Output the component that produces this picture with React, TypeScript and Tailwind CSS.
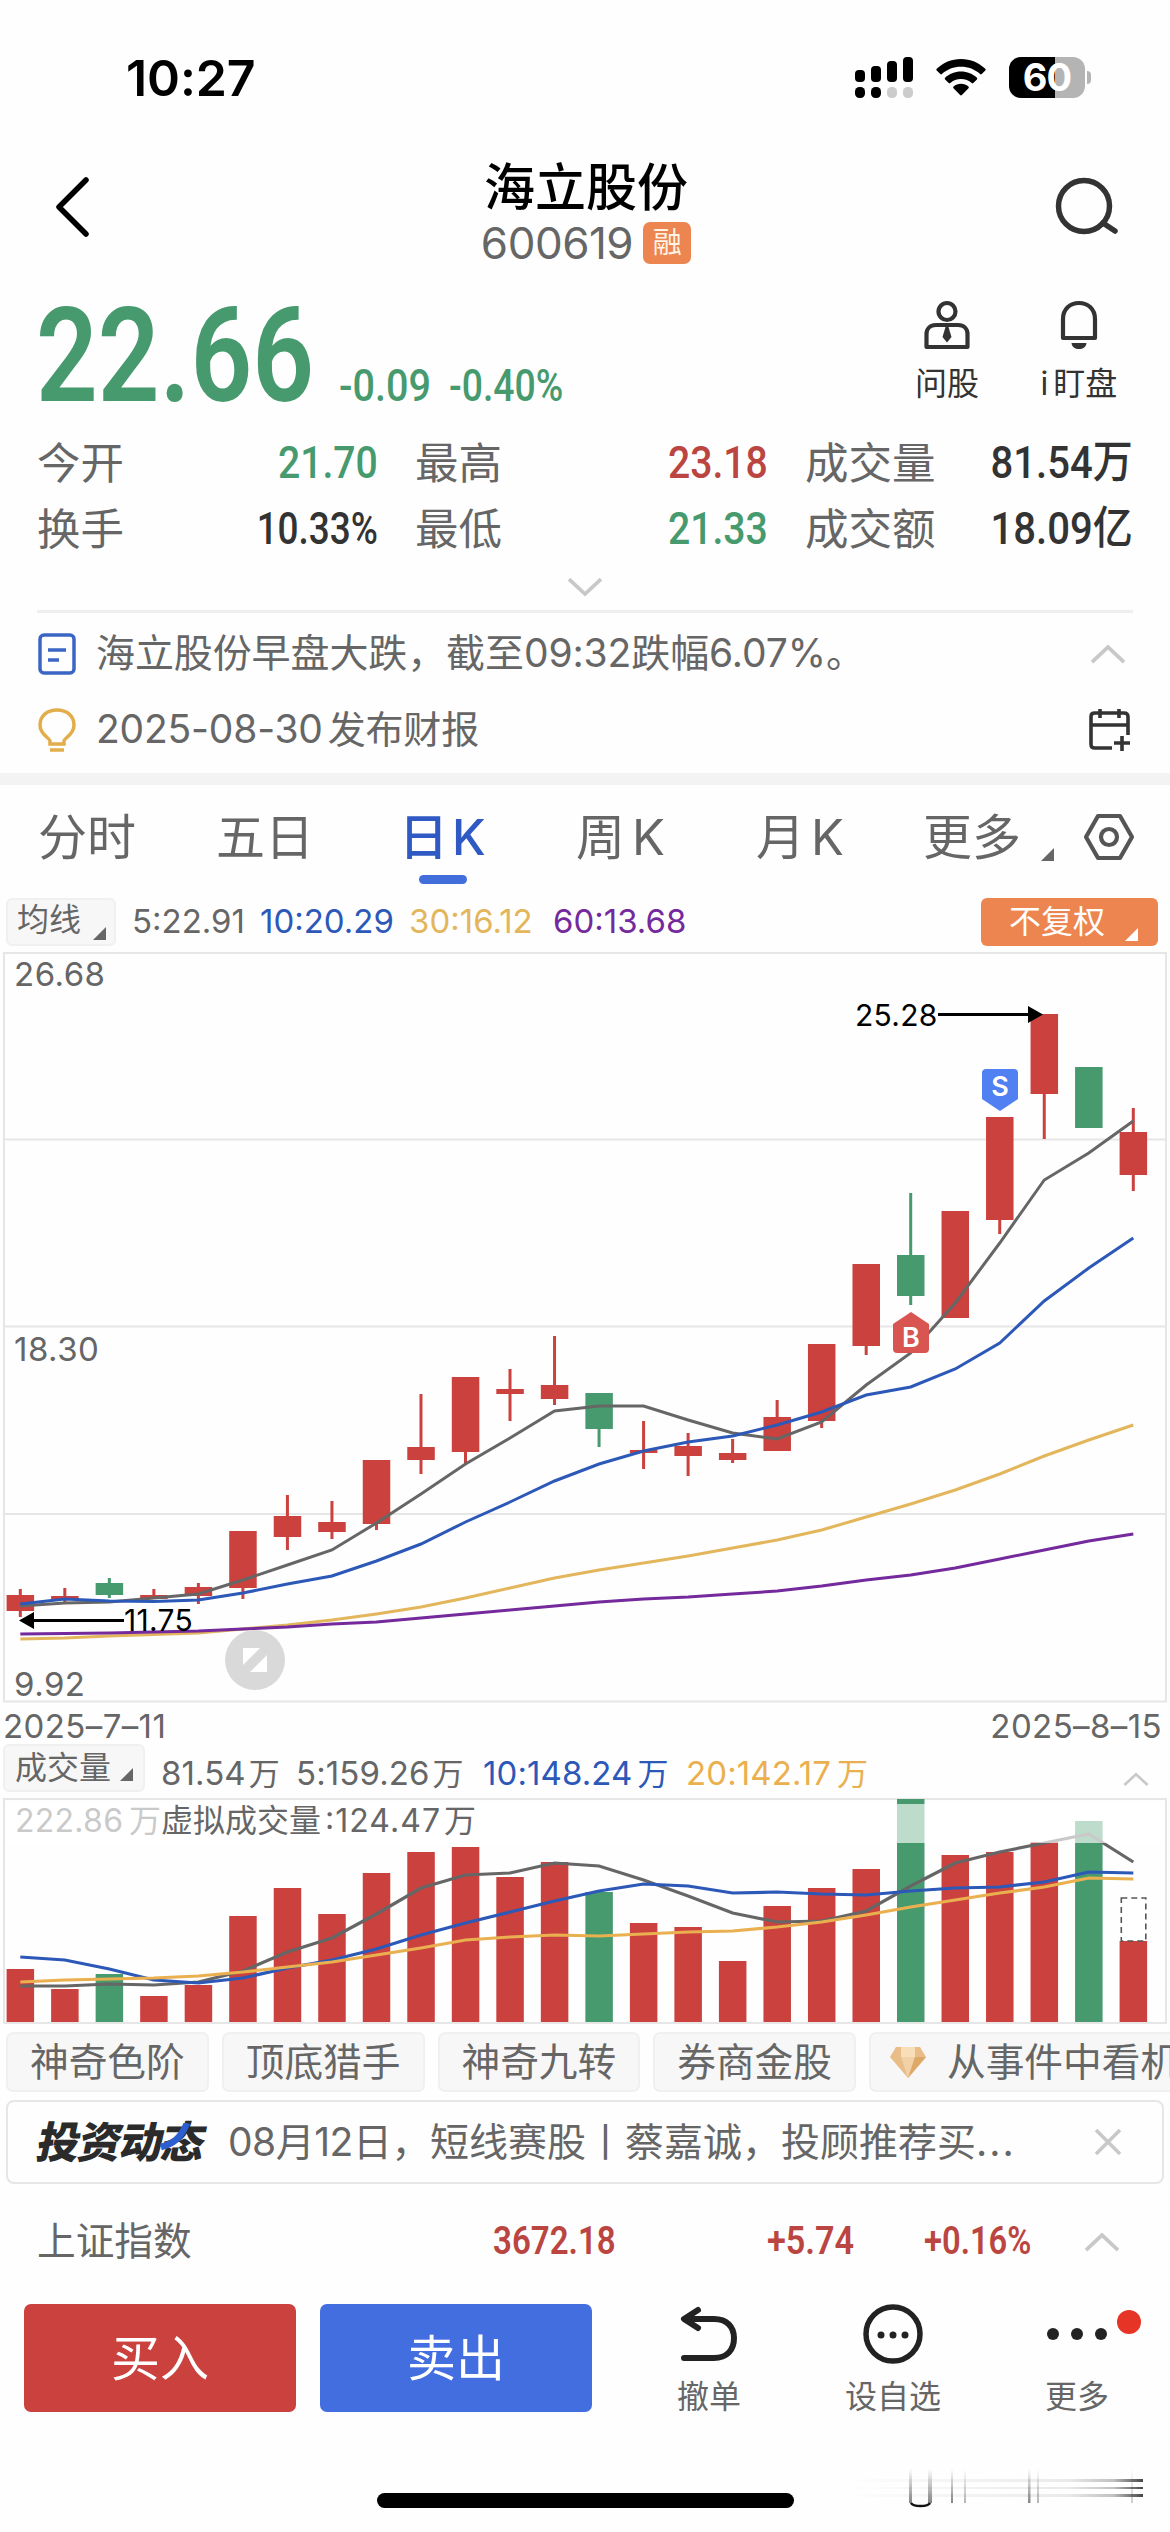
import type { ReactNode } from "react";

const RED = "#cb413d";
const GREEN = "#479a6e";
const STEP = 44.52;
const cx = (i: number) => 17.3 + i * STEP;

type Candle = { high: number; top: number; bottom: number; low: number; down?: boolean };

// Pixel rows inside the price panel
const candles: Candle[] = [
    { high: 637, top: 643, bottom: 659, low: 665 },
    { high: 636, top: 644, bottom: 648, low: 650 },
    { high: 626, top: 631, bottom: 643, low: 646, down: true },
    { high: 637, top: 643, bottom: 647, low: 647 },
    { high: 631, top: 635, bottom: 644, low: 652 },
    { high: 579, top: 579, bottom: 636, low: 647 },
    { high: 543, top: 564, bottom: 585, low: 598 },
    { high: 549, top: 570, bottom: 580, low: 587 },
    { high: 508, top: 508, bottom: 572, low: 578 },
    { high: 442, top: 495, bottom: 508, low: 522 },
    { high: 425, top: 425, bottom: 500, low: 513 },
    { high: 417, top: 437, bottom: 442, low: 469 },
    { high: 384, top: 433, bottom: 447, low: 453 },
    { high: 441, top: 441, bottom: 477, low: 495, down: true },
    { high: 469, top: 498, bottom: 501, low: 517 },
    { high: 481, top: 494, bottom: 504, low: 524 },
    { high: 487, top: 501, bottom: 508, low: 511 },
    { high: 448, top: 465, bottom: 499, low: 499 },
    { high: 392, top: 392, bottom: 469, low: 476 },
    { high: 312, top: 312, bottom: 394, low: 403 },
    { high: 241, top: 303, bottom: 344, low: 353, down: true },
    { high: 259, top: 259, bottom: 366, low: 366 },
    { high: 165, top: 165, bottom: 268, low: 282 },
    { high: 62, top: 62, bottom: 142, low: 187 },
    { high: 115, top: 115, bottom: 176, low: 176, down: true },
    { high: 156, top: 180, bottom: 223, low: 239 },
];

const priceLines = [
    { color: "#666666", ys: [654, 651, 650, 646, 642, 628, 613, 598, 571, 542, 512, 486, 459, 454, 454, 468, 481, 487, 470, 433, 401, 351, 291, 228, 201, 169] },
    { color: "#2c58b8", ys: [652, 647, 649, 649.5, 648, 641, 632, 624, 609, 592, 570, 550, 529, 512, 499, 490, 484, 473, 460, 443, 435, 417, 391, 349, 316, 286] },
    { color: "#e3b65c", ys: [687, 686, 684, 682.5, 681, 677, 673, 668, 662, 655, 646, 636, 626, 618, 611, 604, 596, 588, 578, 565, 552, 538, 522, 504, 488, 473] },
    { color: "#74299c", ys: [682, 681.5, 681, 680, 679, 677, 675, 672, 670, 666, 662, 658, 654, 650, 647, 645, 642, 639, 634, 628, 623, 616, 607, 598, 589, 582] },
];

const volumes = [171, 191, 176, 198, 187, 118, 90, 116, 75, 54, 49, 79, 64, 94, 125, 129, 163, 108, 90, 71, 1, 57, 54, 44, 23, 143];
const downDays = [2, 13, 20, 24];

const volumeLines = [
    { color: "#666666", ys: [188, 188, 186, 187, 184, 173, 154, 140, 116, 90, 77, 75, 65, 68, 82, 98, 115, 124, 123, 113, 88, 65, 54, 45, 36, 64] },
    { color: "#2c58b8", ys: [159, 162, 171, 182, 185, 180, 170, 162, 151, 137, 125, 114, 103, 93, 86, 88, 95, 94, 96, 97, 93, 90, 89, 84, 74, 75] },
    { color: "#eab04f", ys: [184, 182, 181, 180, 178, 174, 169, 164, 157, 150, 142, 139, 137, 138, 136, 134, 133, 129, 124, 117, 109, 102, 95, 89, 80, 81] },
];

const toPoints = (ys: number[]) => ys.map((y, i) => `${cx(i)},${y}`).join(" ");

function Corner({ className = "" }: { className?: string }) {
    return (
        <svg className={className} width="13" height="13" viewBox="0 0 13 13">
            <path d="M13 0V13H0Z" fill="currentColor" />
        </svg>
    );
}

function Chevron({ up = false, width = 36 }: { up?: boolean; width?: number }) {
    return (
        <svg width={width} height={width * 0.56} viewBox="0 0 36 20" fill="none" stroke="#c8c8c8" strokeWidth="3.6">
            <path d={up ? "M2 18 18 3 34 18" : "M2 2 18 17 34 2"} />
        </svg>
    );
}

function StatusBar() {
    return (
        <div className="flex h-[150px] items-start justify-between pl-[126px] pr-[79px]">
            <span className="mt-[41px] text-[50px] font-semibold leading-[74px] tracking-[-0.100px] text-black">10:27</span>
            <div className="mt-[57px] flex items-start">
                <svg width="58" height="42" viewBox="0 0 58 42">
                    <rect x="0" y="13" width="10" height="12" rx="4" />
                    <rect x="16" y="9" width="10" height="16" rx="4" />
                    <rect x="32" y="4" width="10" height="21" rx="4" />
                    <rect x="48" y="0" width="10" height="25" rx="4" />
                    <rect x="0" y="30" width="10" height="11" rx="4.5" />
                    <rect x="16" y="30" width="10" height="11" rx="4.5" />
                    <rect x="32" y="30" width="10" height="11" rx="4.5" fill="#cccccc" />
                    <rect x="48" y="30" width="10" height="11" rx="4.5" fill="#cccccc" />
                </svg>
                <svg className="ml-[23px] mt-[2px]" width="50" height="37" viewBox="0 0 50 37">
                    <path d="M25 0C34.500 0 43 3.700 49.300 9.800C49.800 10.300 49.800 11 49.300 11.500L45.700 15.100C45.200 15.600 44.600 15.600 44.100 15.100C39 10.300 32.300 7.800 25 7.800S11 10.300 5.900 15.100C5.400 15.600 4.800 15.600 4.300 15.100L.7 11.500C.2 11 .2 10.300 .7 9.800C7 3.700 15.500 0 25 0Z" />
                    <path d="M25 12.500C31.200 12.500 36.800 14.900 40.900 18.700C41.400 19.200 41.400 19.900 40.900 20.400L37.300 24C36.800 24.500 36.200 24.500 35.700 24C32.900 21.500 29.100 20 25 20S17.100 21.500 14.300 24C13.800 24.500 13.200 24.500 12.700 24L9.100 20.400C8.600 19.900 8.600 19.200 9.100 18.700C13.200 14.900 18.800 12.500 25 12.500Z" />
                    <path d="M25 24.800C27.800 24.800 30.400 25.800 32.400 27.500C33 28 33 28.700 32.500 29.200L25.900 36C25.400 36.500 24.600 36.500 24.100 36L17.500 29.200C17 28.700 17 28 17.600 27.500C19.600 25.800 22.200 24.800 25 24.800Z" />
                </svg>
                <div className="ml-[23px] flex h-[41px] w-[76px] items-center justify-center rounded-[12px] bg-[linear-gradient(to_right,#000_60%,#b4b4b4_60%)] text-[38px] font-bold leading-[41px] tracking-tight text-white">60</div>
                <div className="ml-[2px] mt-[14px] h-[13px] w-[4px] rounded-r-full bg-[#b4b4b4]" />
            </div>
        </div>
    );
}

function Header() {
    return (
        <header className="flex h-[130px] items-start justify-between pl-[55px] pr-[51px]">
            <svg className="mt-[26px]" width="36" height="62" viewBox="0 0 36 62" fill="none" stroke="#000" strokeWidth="5.500" strokeLinecap="round" strokeLinejoin="round">
                <path d="M31 4 4 31 31 58" />
            </svg>
            <div className="ml-[26px] mt-[7px] flex flex-col items-center">
                <h1 className="text-[51px] font-medium leading-[62px] text-black">海立股份</h1>
                <div className="mt-[2px] flex h-[44px] items-center gap-[10px]">
                    <span className="text-[44px] leading-[44px] tracking-[-0.500px] text-[#666]">600619</span>
                    <span className="flex h-[42px] w-[48px] items-center justify-center rounded-[7px] bg-[#ec8550] text-[29px] leading-none text-[#fff3e6]">融</span>
                </div>
            </div>
            <svg className="mt-[26px]" width="64" height="60" viewBox="0 0 64 60" fill="none" stroke="#333" strokeWidth="5.500" strokeLinecap="round">
                <circle cx="29" cy="30" r="25.500" />
                <path d="m48 47 12 8" />
            </svg>
        </header>
    );
}

function Quote() {
    return (
        <section className="flex h-[146px] items-start justify-between pl-[36px] pr-[52px]">
            <div className="flex items-baseline pt-[3px] font-[Roboto] text-[#479a6e]">
                <span className="w-[303px] whitespace-nowrap">
                    <span className="inline-block origin-left scale-x-[0.82] text-[132px] font-semibold leading-[146px]">22.66</span>
                </span>
                <span className="w-[110px]">
                    <span className="inline-block origin-left scale-x-[0.88] text-[45px] font-medium">-0.09</span>
                </span>
                <span className="inline-block origin-left scale-x-[0.83] text-[45px] font-medium">-0.40%</span>
            </div>
            <div className="mt-[20px] flex gap-[61px] text-[32px] text-[#333]">
                <div className="flex w-[64px] flex-col items-center">
                    <svg width="48" height="50" viewBox="0 0 48 50" fill="none" stroke="#333" strokeWidth="4.200">
                        <circle cx="24" cy="11.500" r="8.500" />
                        <path d="M13 25H35C41 25 44.500 29 44.500 34V47H3.500V34C3.500 29 7 25 13 25Z" strokeLinejoin="round" />
                        <path d="M22.500 27H25.500L28.500 37 24 42.500 19.500 37Z" fill="#333" stroke="none" />
                    </svg>
                    <span className="mt-[7px] whitespace-nowrap leading-[54px]">问股</span>
                </div>
                <div className="flex w-[78px] flex-col items-center">
                    <svg width="48" height="50" viewBox="0 0 48 50" fill="none" stroke="#333" strokeWidth="4.200">
                        <path d="M8 38V19C8 9 15 3 24 3S40 9 40 19V38Z" strokeLinejoin="round" />
                        <path d="M16.500 43H31.500C31 47 28 49 24 49S17 47 16.500 43Z" fill="#333" stroke="none" />
                    </svg>
                    <span className="mt-[7px] flex gap-[5px] whitespace-nowrap leading-[54px]"><span>i</span>盯盘</span>
                </div>
            </div>
        </section>
    );
}

function Stat({ label, value, color, className }: { label: string; value: string; color: string; className: string }) {
    return (
        <div className={`flex items-center justify-between ${className}`}>
            <span className="text-[43.500px] text-[#666]">{label}</span>
            <span className={`origin-right whitespace-nowrap font-[Roboto,'Noto_Sans_CJK_SC'] text-[45px] font-medium ${color}`}>{value}</span>
        </div>
    );
}

function Stats() {
    return (
        <section className="px-[37px] leading-[66px]">
            <div className="flex justify-between">
                <Stat label="今开" value="21.70" color="scale-x-[0.87] text-[#479a6e]" className="w-[341px]" />
                <Stat label="最高" value="23.18" color="scale-x-[0.87] text-[#bb4540]" className="w-[353px]" />
                <Stat label="成交量" value="81.54万" color="scale-x-[0.89] text-[#333]" className="w-[328px]" />
            </div>
            <div className="flex justify-between">
                <Stat label="换手" value="10.33%" color="scale-x-[0.82] text-[#333]" className="w-[341px]" />
                <Stat label="最低" value="21.33" color="scale-x-[0.87] text-[#479a6e]" className="w-[353px]" />
                <Stat label="成交额" value="18.09亿" color="scale-x-[0.89] text-[#333]" className="w-[328px]" />
            </div>
            <div className="flex h-[51px] justify-center border-b-[3px] border-[#eeeeee] pt-[15px]">
                <Chevron />
            </div>
        </section>
    );
}

function Notices() {
    return (
        <section className="h-[172px] border-b-[12px] border-[#f3f3f3] px-[38px] pt-[3px] text-[39px] text-[#666]">
            <div className="flex h-[76px] items-center">
                <svg width="38" height="42" viewBox="0 0 38 42" fill="none" stroke="#3b65c4" strokeWidth="3.500">
                    <rect x="2" y="2" width="34" height="38" rx="4" />
                    <path d="M10 17H28M10 27H21" />
                </svg>
                <span className="ml-[20px] tracking-[-0.100px]">海立股份早盘大跌，截至09:32跌幅6.07%。</span>
                <div className="ml-auto mr-[6px]">
                    <Chevron up />
                </div>
            </div>
            <div className="flex h-[76px] items-center">
                <svg width="38" height="44" viewBox="0 0 38 44" fill="none" stroke="#e2ae4b" strokeWidth="3.500">
                    <path d="M12 36V33C12 30 2 27 2 17C2 8 9 2 19 2S36 8 36 17C36 27 26 30 26 33V36ZM12 42H26" />
                </svg>
                <span className="ml-[20px] tracking-[-0.200px]">2025-08-30<span className="ml-[5px] text-[38px]">发布财报</span></span>
                <svg className="ml-auto" width="44" height="44" viewBox="0 0 44 44" fill="none" stroke="#333" strokeWidth="3.600">
                    <path d="M24 40H7C4 40 3 39 3 36V9C3 6 4 5 7 5H36C39 5 40 6 40 9V27M3 17H40M12 1V10M31 1V10M34 28V43M26 35H42" />
                </svg>
            </div>
        </section>
    );
}

function Tabs() {
    return (
        <nav className="flex h-[110px] items-start pl-[38px] pt-[17px] text-[49px] leading-[72px] text-[#666]">
            <span className="w-[178px]">分时</span>
            <span className="w-[183px]">五日</span>
            <div className="flex w-[177px] flex-col font-medium text-[#2f5ac3]">
                <span>日<span className="ml-[4px]">K</span></span>
                <span className="ml-[20px] mt-px h-[9px] w-[48px] rounded-full bg-[#426edc]" />
            </div>
            <span className="w-[180px]">周<span className="ml-[7px]">K</span></span>
            <span className="w-[167px]">月<span className="ml-[6px]">K</span></span>
            <span>更多</span>
            <Corner className="ml-[20px] mt-[46px]" />
            <svg className="ml-[29px] mt-[11px]" width="52" height="48" viewBox="0 0 52 48" fill="none" stroke="#555" strokeWidth="4.200" strokeLinejoin="round">
                <path d="M15 3H37L49 24 37 45H15L3 24Z" />
                <circle cx="26" cy="24" r="8" />
            </svg>
        </nav>
    );
}

function PriceChart() {
    return (
        <section className="px-[3px]">
            <div className="flex h-[58px] items-start pl-[3px] pr-[9px] pt-[4px] text-[33px] leading-[46px] text-[#666]">
                <div className="flex h-[48px] w-[110px] items-end rounded-[6px] border-2 border-[#f0f0f0] bg-[#f7f7f7] pb-[4px] pl-[9px] text-[32px] leading-[40px]">
                    均线
                    <Corner className="ml-[12px]" />
                </div>
                <span className="ml-[16px] w-[128px]">5:22.91</span>
                <span className="w-[149px] text-[#2c58b8]">10:20.29</span>
                <span className="w-[144px] text-[#e3b65c]">30:16.12</span>
                <span className="text-[#74299c]">60:13.68</span>
                <div className="ml-auto flex h-[48px] w-[177px] items-end rounded-[6px] bg-[#ec8550] pb-[5px] pl-[28px] text-[32px] leading-[38px] text-white">
                    不复权
                    <Corner className="ml-[20px]" />
                </div>
            </div>
            <svg className="block font-[Inter]" width="1164" height="751" viewBox="0 0 1164 751">
                <g fill="none" stroke="#e6e6e6" strokeWidth="2">
                    <rect x="1" y="1" width="1162" height="748.500" />
                    <path d="M0 187.500H1164M0 374.500H1164M0 562H1164" />
                </g>
                <g fill="#666" fontSize="33" letterSpacing="0.500">
                    <text x="11" y="34">26.68</text>
                    <text x="11" y="409">18.30</text>
                    <text x="11" y="744">9.92</text>
                </g>
                {candles.map((c, i) => (
                    <g key={i} fill={c.down ? GREEN : RED}>
                        <rect x={cx(i) - 1.5} y={c.high} width="3" height={c.low - c.high} />
                        <rect x={cx(i) - 13.7} y={c.top} width="27.500" height={c.bottom - c.top} />
                    </g>
                ))}
                {priceLines.map((line) => (
                    <polyline key={line.color} points={toPoints(line.ys)} fill="none" stroke={line.color} strokeWidth="3" />
                ))}
                {/* High and low callouts */}
                <g fill="#000" stroke="none">
                    <text x="852" y="74" fontSize="30" letterSpacing="0.300">25.28</text>
                    <rect x="935" y="61" width="92" height="3" />
                    <path d="M1025 54V71L1040 62.500Z" />
                    <text x="121" y="679" fontSize="30" letterSpacing="0.300">11.75</text>
                    <rect x="30" y="667" width="91" height="3" />
                    <path d="M31 660V677L16 668.500Z" />
                </g>
                {/* Trade markers */}
                <g textAnchor="middle" fontSize="27" fontWeight="600">
                    <path d="M979 121C979 118.500 980.500 117 983 117H1011C1013.500 117 1015 118.500 1015 121V147L997 159 979 147Z" fill="#5080f2" />
                    <text x="997" y="144" fill="#fff">S</text>
                    <path d="M890 372 908 360 926 372V397C926 399.500 924.500 401 922 401H894C891.500 401 890 399.500 890 397Z" fill="#d95552" />
                    <text x="908" y="395" fill="#fff">B</text>
                </g>
                <circle cx="252" cy="708" r="30" fill="#d9d9d9" />
                <path d="M240 696H257L240 713ZM264 703V720H247Z" fill="#fff" />
            </svg>
            <div className="flex h-[41px] justify-between pr-[5px] text-[33px] leading-[46px] tracking-[0.400px] text-[#666]">
                <span>2025–7–11</span>
                <span>2025–8–15</span>
            </div>
        </section>
    );
}

function VolumeChart() {
    return (
        <section className="px-[3px]">
            <div className="flex h-[54px] items-start text-[33px] leading-[58px] tracking-[0.100px] text-[#666]">
                <div className="flex h-[48px] w-[142px] items-center rounded-[6px] border-2 border-[#f0f0f0] bg-[#f7f7f7] pl-[10px] text-[32px] tracking-normal">
                    成交量
                    <Corner className="ml-[9px] mt-[12px]" />
                </div>
                <span className="ml-[16px] w-[135px]">81.54<span className="ml-[3px] text-[31px]">万</span></span>
                <span className="w-[187px]">5:159.26<span className="ml-[3px] text-[31px]">万</span></span>
                <span className="w-[203px] text-[#2c58b8]">10:148.24<span className="ml-[5px] text-[31px]">万</span></span>
                <span className="text-[#eab04f]">20:142.17<span className="ml-[6px] text-[31px]">万</span></span>
                <div className="ml-auto mr-[18px] mt-[28px]">
                    <Chevron up width={26} />
                </div>
            </div>
            <svg className="block font-[Inter,'Noto_Sans_CJK_SC']" width="1164" height="226" viewBox="0 0 1164 226">
                <rect x="1" y="1" width="1162" height="224" fill="none" stroke="#e6e6e6" strokeWidth="2" />
                {volumes.map((top, i) => (
                    <rect key={i} x={cx(i) - 13.7} y={top} width="27.500" height={224 - top} fill={downDays.includes(i) ? GREEN : RED} />
                ))}
                {volumeLines.map((line) => (
                    <polyline key={line.color} points={toPoints(line.ys)} fill="none" stroke={line.color} strokeWidth="3.200" />
                ))}
                <rect x={cx(25) - 12} y="100" width="24.500" height="43" fill="#fff" stroke="#555" strokeWidth="1.600" strokeDasharray="6 4" />
                <g fill="#666" fontSize="32">
                    <text x="12" y="34" textLength="108">222.86</text>
                    <text x="126" y="34">万</text>
                </g>
                <rect x="2" y="6" width="1160" height="39" fill="#fff" fillOpacity="0.650" />
                <g fill="#666" fontSize="32">
                    <text x="158" y="34">虚拟成交量</text>
                    <text x="322" y="34" textLength="115">:124.47</text>
                    <text x="441" y="34">万</text>
                </g>
            </svg>
        </section>
    );
}

function Chip({ children }: { children: ReactNode }) {
    return (
        <span className="flex h-[60px] shrink-0 items-center rounded-[7px] border-2 border-[#f0f0f0] bg-[#f7f7f7] px-[22px]">
            {children}
        </span>
    );
}

function Indicators() {
    return (
        <div className="flex h-[76px] gap-[13px] overflow-hidden whitespace-nowrap pl-[6px] pt-[8px] text-[38.700px] leading-[56px] text-[#666]">
            <Chip>神奇色阶</Chip>
            <Chip>顶底猎手</Chip>
            <Chip>神奇九转</Chip>
            <Chip>券商金股</Chip>
            <Chip>
                <svg className="mr-[21px] -ml-[3px]" width="36" height="33" viewBox="0 0 36 33">
                    <path d="M6 1H30L36 11 18 32 0 11Z" fill="#e8bd88" />
                    <path d="M11 11H25L18 32Z" fill="#f2d1a6" />
                    <path d="M11 1H25V11H11Z" fill="#f8dfba" />
                    <path d="M25 11H36L18 32Z" fill="#dda969" />
                </svg>
                从事件中看机
            </Chip>
        </div>
    );
}

function NewsBar() {
    return (
        <div className="mx-[6px] flex h-[84px] items-center rounded-[8px] border-2 border-[#e6e6e6] pl-[30px] pr-[40px]">
            <span className="relative w-[184px] shrink-0 whitespace-nowrap">
                <b className="inline-block -skew-x-12 text-[43px] font-black leading-[60px] tracking-[-1.500px] text-[#2b2b2b]">投资动态</b>
                <svg className="absolute left-[121px] top-[11px]" width="34" height="28" viewBox="0 0 34 28" fill="none" stroke="#2e5fd0" strokeWidth="6.500">
                    <path d="M28 0C22 15 14 21 2 24" />
                </svg>
            </span>
            <span className="ml-[6px] whitespace-nowrap text-[39px] text-[#666]">
                <span className="tracking-[-0.500px]">08月12日，</span>短线赛股丨蔡嘉诚，投顾推荐买<span className="tracking-[2px]">...</span>
            </span>
            <svg className="ml-auto" width="28" height="28" viewBox="0 0 28 28" stroke="#c8c8c8" strokeWidth="3.500">
                <path d="M2 2 26 26M26 2 2 26" />
            </svg>
        </div>
    );
}

function IndexRow() {
    return (
        <div className="flex h-[120px] items-center pb-[5px] pl-[37px] font-[Roboto,'Noto_Sans_CJK_SC'] text-[38px] font-semibold text-[#bb4540]">
            <span className="w-[456px] text-[38.700px] font-normal text-[#666]">上证指数</span>
            <span className="w-[274px]"><span className="inline-block origin-left scale-x-[0.87]">3672.18</span></span>
            <span className="w-[157px]"><span className="inline-block origin-left scale-x-[0.9]">+5.74</span></span>
            <span className="w-[160px]"><span className="inline-block origin-left scale-x-[0.86]">+0.16%</span></span>
            <Chevron up />
        </div>
    );
}

function ActionBar() {
    return (
        <footer className="flex h-[108px] pl-[24px] text-[32px] text-[#666]">
            <button className="h-[108px] w-[272px] rounded-[7px] bg-[#cb413d] pt-[2px] text-[49px] text-white">买入</button>
            <button className="ml-[24px] h-[108px] w-[272px] rounded-[7px] bg-[#426edf] pt-[2px] text-[49px] text-white">卖出</button>
            <div className="ml-[67px] flex w-[100px] flex-col items-center">
                <svg className="shrink-0" width="62" height="60" viewBox="0 0 62 60" fill="none" stroke="#222" strokeWidth="6" strokeLinecap="round" strokeLinejoin="round">
                    <path d="M20 6 6 15 20 24M8 15H36C49 15 56 23 56 34C56 46 49 54 36 54H6" />
                </svg>
                <span className="mt-[7px] leading-[52px]">撤单</span>
            </div>
            <div className="ml-[84px] flex w-[100px] flex-col items-center">
                <svg className="shrink-0" width="60" height="60" viewBox="0 0 60 60">
                    <circle cx="30" cy="30" r="27" fill="none" stroke="#222" strokeWidth="5.500" />
                    <circle cx="18" cy="31" r="3.500" fill="#222" />
                    <circle cx="30" cy="31" r="3.500" fill="#222" />
                    <circle cx="42" cy="31" r="3.500" fill="#222" />
                </svg>
                <span className="mt-[7px] leading-[52px]">设自选</span>
            </div>
            <div className="ml-[74px] flex w-[120px] flex-col items-center">
                <svg className="shrink-0 overflow-visible" width="60" height="60" viewBox="0 0 60 60" fill="#222">
                    <circle cx="6" cy="30" r="6" />
                    <circle cx="30" cy="30" r="6" />
                    <circle cx="54" cy="30" r="6" />
                    <circle cx="82" cy="18" r="12" fill="#e63426" />
                </svg>
                <span className="mt-[7px] leading-[52px]">更多</span>
            </div>
        </footer>
    );
}

function HomeIndicator() {
    return (
        <div className="flex h-[120px] items-end pb-[24px] pl-[377px]">
            <div className="h-[15px] w-[417px] rounded-full bg-black" />
            <svg className="ml-[46px]" width="308" height="42" viewBox="0 0 308 42" fill="none">
                <defs>
                    <linearGradient id="rise" x1="0" y1="0" x2="0" y2="1">
                        <stop offset="0" stopColor="#333" stopOpacity="0" />
                        <stop offset="1" stopColor="#333" stopOpacity="0.600" />
                    </linearGradient>
                    <linearGradient id="run" x1="0" y1="0" x2="1" y2="0">
                        <stop offset="0" stopColor="#333" stopOpacity="0" />
                        <stop offset="0.750" stopColor="#333" stopOpacity="0.100" />
                        <stop offset="0.900" stopColor="#333" stopOpacity="0.300" />
                        <stop offset="1" stopColor="#333" stopOpacity="0.900" />
                    </linearGradient>
                </defs>
                <g fill="url(#rise)">
                    <rect x="69" y="3" width="3" height="34" />
                    <rect x="88" y="3" width="4" height="34" />
                    <rect x="111" y="3" width="2" height="34" />
                    <rect x="124" y="3" width="2" height="34" opacity="0.600" />
                    <rect x="188" y="3" width="2.500" height="34" />
                    <rect x="197" y="3" width="2" height="34" opacity="0.600" />
                    <rect x="291" y="3" width="2" height="34" opacity="0.400" />
                </g>
                <path d="M71 37C73 41 88 41 90 37" stroke="#111" strokeWidth="2.500" />
                <g fill="url(#run)">
                    <rect x="4" y="13" width="299" height="3" />
                    <rect x="4" y="21" width="299" height="2" />
                    <rect x="4" y="28" width="299" height="3" />
                </g>
            </svg>
        </div>
    );
}

export default function App() {
    return (
        <div className="flex h-[2532px] w-[1170px] flex-col overflow-hidden bg-[#fefefe] font-[Inter,'Noto_Sans_CJK_SC',sans-serif]">
            <StatusBar />
            <Header />
            <Quote />
            <div className="h-[4px]" />
            <Stats />
            <Notices />
            <Tabs />
            <PriceChart />
            <VolumeChart />
            <Indicators />
            <NewsBar />
            <IndexRow />
            <ActionBar />
            <HomeIndicator />
        </div>
    );
}
